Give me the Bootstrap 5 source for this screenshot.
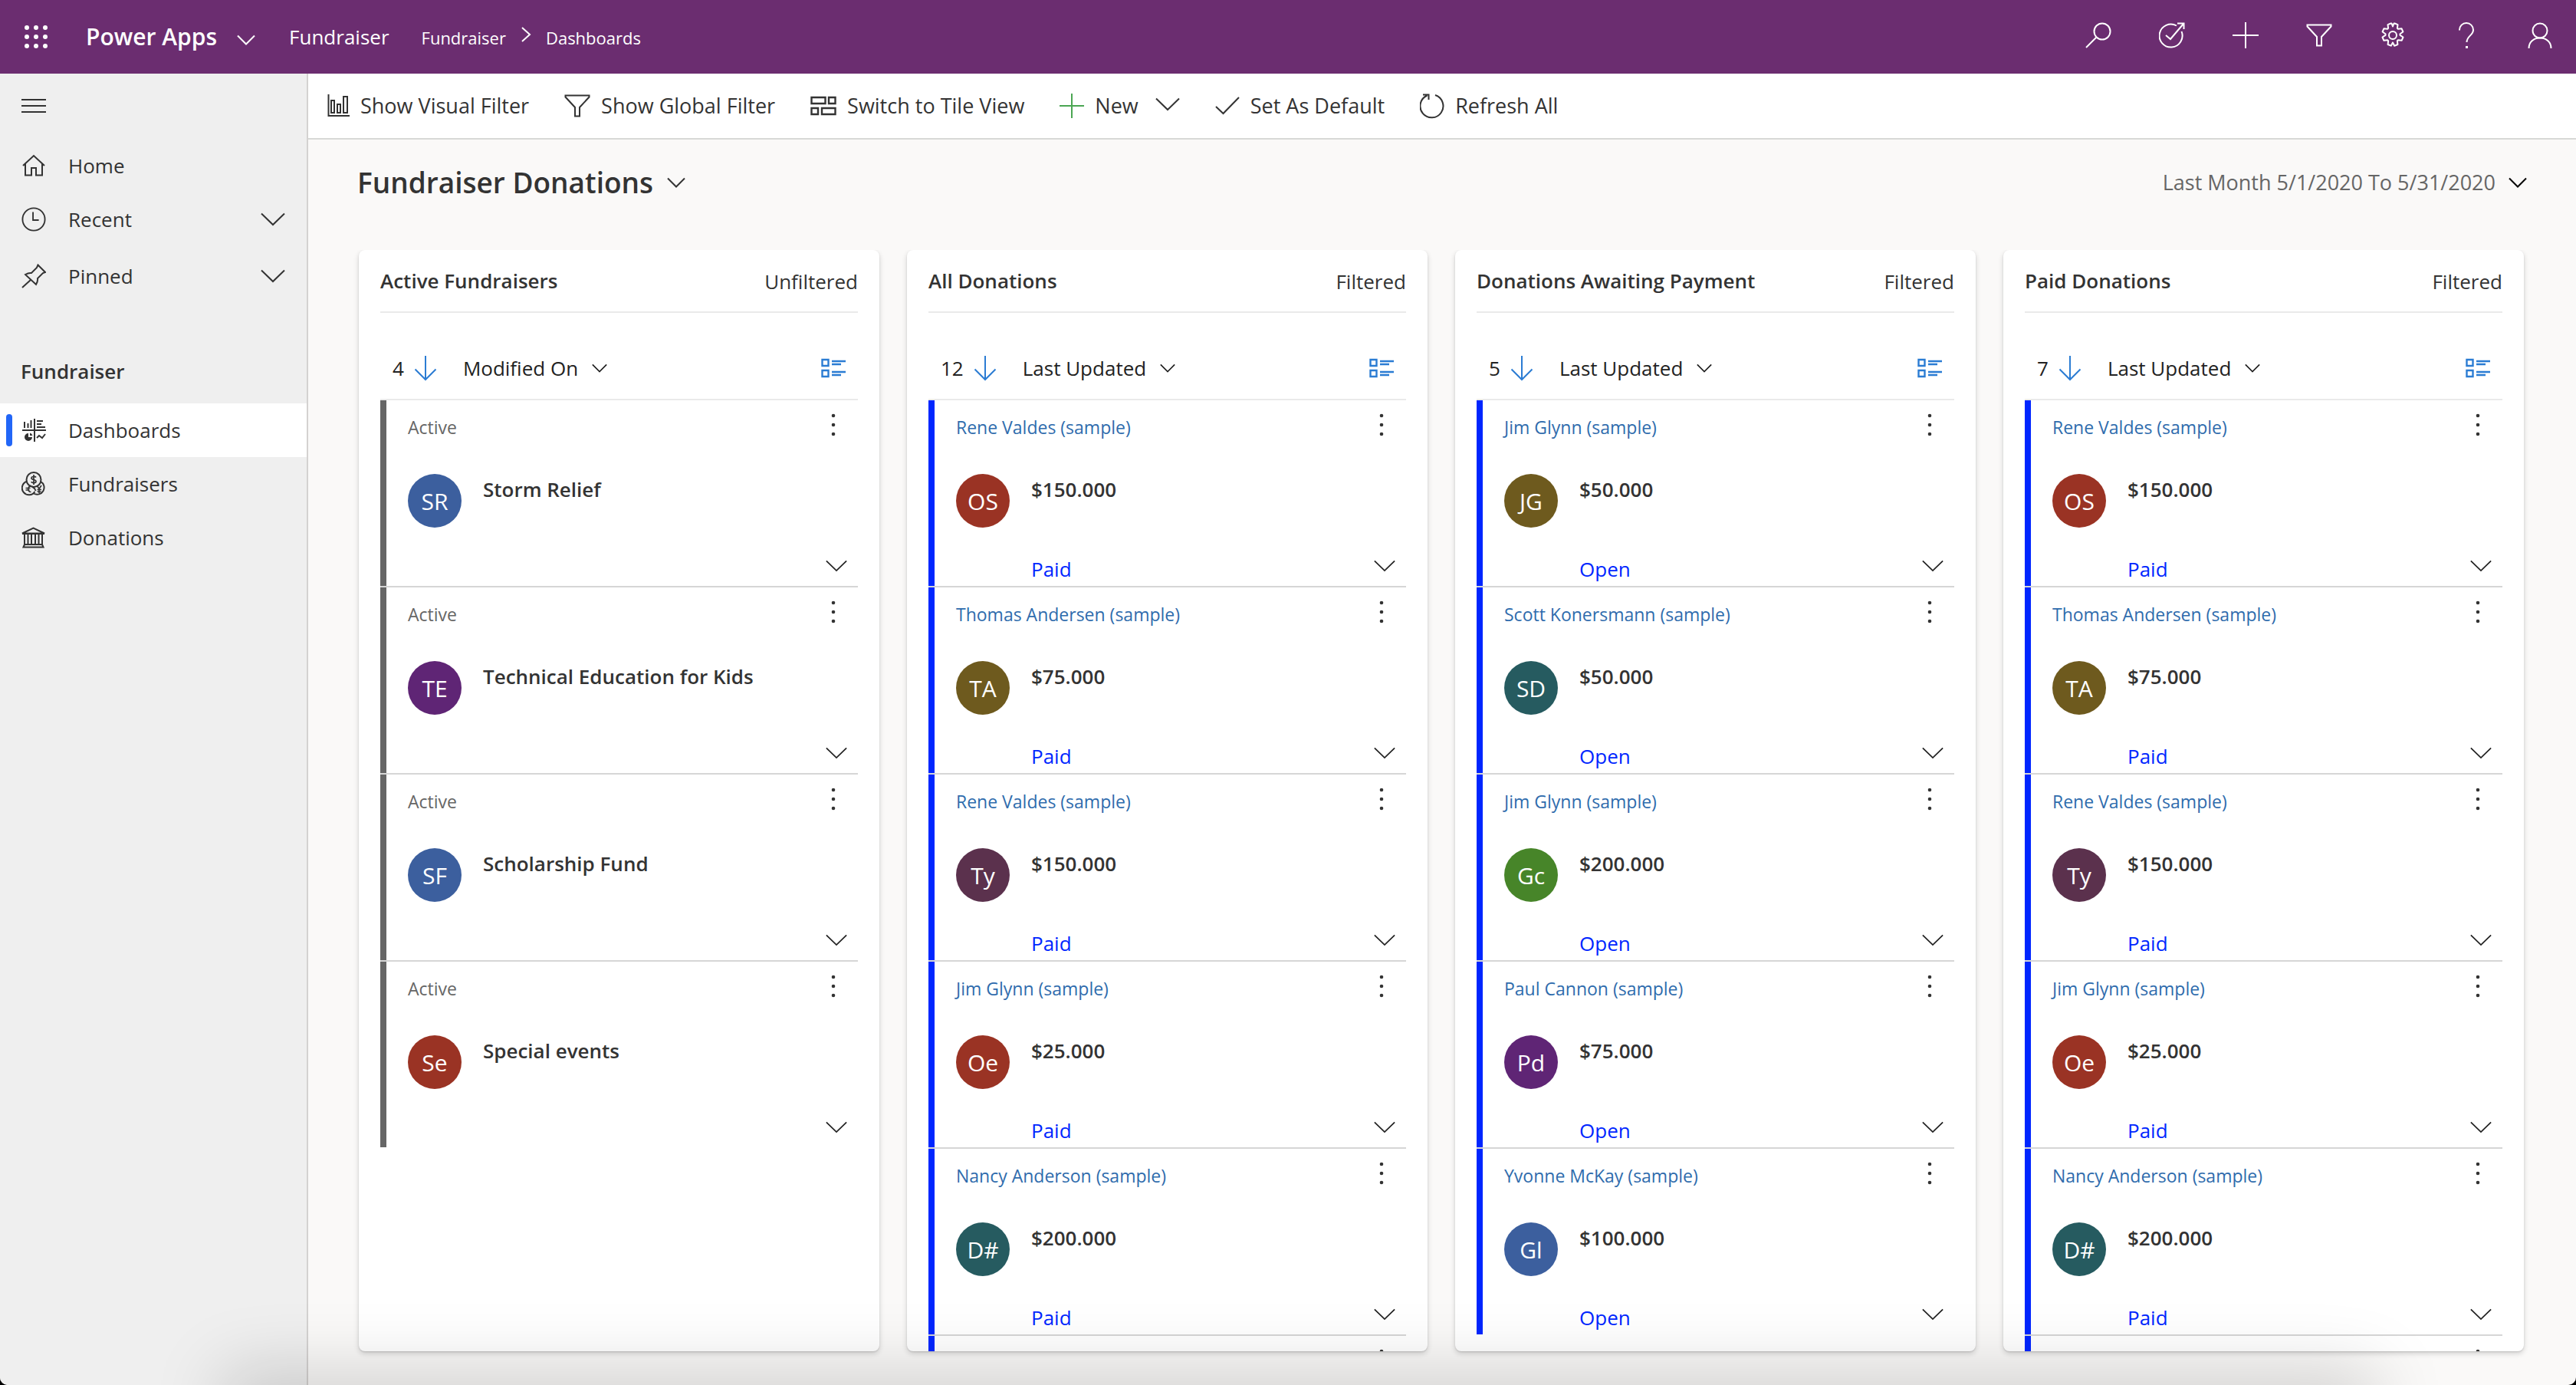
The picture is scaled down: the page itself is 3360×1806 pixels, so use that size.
<!DOCTYPE html>
<html lang="en">
<head>
<meta charset="utf-8">
<meta name="viewport" content="width=device-width, initial-scale=1">
<title>Fundraiser Donations - Power Apps</title>
<link href="https://cdn.jsdelivr.net/npm/bootstrap@5.3.0/dist/css/bootstrap.min.css" rel="stylesheet">
<style>
  html { background: #000; }
  body { font-family: "Open Sans", "Noto Sans", sans-serif; font-size: 26px; line-height: 40px; color: #333; background: #000; }
  svg { fill: none; stroke: currentColor; stroke-width: 2; flex: none; display: block; }
  button { font: inherit; color: inherit; background: none; border: 0; padding: 0; text-align: left; white-space: nowrap; }
  a { color: inherit; text-decoration: none; }
  .app-shell { background: #faf9f8; border-radius: 0 0 10px 10px; }
  .top-bar { height: 96px; background: #6b2d70; color: #fff; padding: 0 30px 0 32px; }
  .launcher { margin-right: 50px; }
  .brand-name { font-size: 30px; font-weight: 600; }
  .brand-name svg { margin: 8px 0 0 26px; }
  .page-crumbs { gap: 42px; margin-left: 44px; }
  .crumbs { font-size: 22px; }
  .top-tools { gap: 62px; padding-bottom: 4px; }
  .side-nav { width: 402px; background: #efefef; border-right: 2px solid #d4d2d1; }
  .side-toggle { padding: 26px 28px 29px; }
  .side-link { height: 70px; padding: 0 28px; gap: 29px; }
  .side-heading { height: 70px; line-height: 70px; padding: 0 27px; margin: 54px 0 7px; font-size: 26px; font-weight: 600; }
  .side-link.is-current { background: #fff; padding-left: 8px; gap: 0; }
  .is-current .marker { width: 8px; height: 42px; border-radius: 4px; background: #2266f7; margin-right: 12px; }
  .is-current svg { margin-right: 29px; }
  .command-bar { height: 86px; background: #fff; border-bottom: 2px solid #d8d8d6; padding: 0 24px; gap: 46px; font-size: 27px; }
  .cmd { gap: 14px; }
  .view-head { padding: 28px 64px 60px 64px; }
  .view-title { font-size: 37px; font-weight: 600; line-height: 56px; }
  .view-title svg { margin-left: 18px; }
  .period { color: #666; gap: 17px; font-size: 27px; }
  .board { padding: 0 68px 44px 66px; gap: 36px; }
  .stream { flex: 1 1 0; background: #fff; border-radius: 8px; padding: 0 28px; box-shadow: 0 3px 7px rgba(0,0,0,.16), 0 1px 2px rgba(0,0,0,.12); }
  .stream-head { height: 82px; flex: none; border-bottom: 2px solid #eaeaea; }
  .stream-head h2 { font-size: 26px; font-weight: 600; line-height: 40px; margin: 0; }
  .stream-head span { padding-top: 2px; }
  .stream-sort { height: 114px; flex: none; border-bottom: 2px solid #eaeaea; padding: 32px 16px 0; color: #222; }
  .sort-arrow { margin: 0 34px 0 13px; }
  .sort-by { gap: 18px; }
  .blue-icon { color: #2b7cd3; }
  .record { height: 244px; border-left: 8px solid #666; border-bottom: 2px solid #d6d6d6; padding: 12px 16px 2px 28px; }
  .record-list li:last-child .record { border-bottom-color: transparent; }
  .donations .record { border-left-color: #0026ff; }
  .record-wrap { position: relative; }
  /* rule runs over the coloured edge too */
  .record-wrap::after { content: ""; position: absolute; left: 0; bottom: 0; width: 8px; height: 2px; background: #d6d6d6; }
  .record-list li:last-child .record-wrap::after { background: #fff; }
  .record-top { height: 40px; margin-bottom: 44px; }
  .owner { font-size: 23px; line-height: 32px; padding-top: 5px; color: #666; }
  a.owner { color: #2f6cad; }
  .record-mid { gap: 28px; }
  .avatar-dot { width: 70px; height: 70px; border-radius: 50%; color: #fff; font-size: 30px; line-height: 72px; text-align: center; flex: none; }
  .record-name { font-weight: 600; }
  .record-end { height: 40px; padding-left: 98px; margin-right: -2px; }
  .status { color: #0026ff; }
  .expand { padding-bottom: 8px; color: #222; }
  /* soft shade along the lower edge of the window */
  .dock-shade { left: 310px; right: 280px; bottom: -52px; height: 50px; box-shadow: 0 0 90px 20px rgba(0,0,0,.17); pointer-events: none; }
</style>
</head>
<body>
<svg width="0" height="0" class="position-absolute" aria-hidden="true">
  <symbol id="chev" viewBox="0 0 32 18"><path d="M1 1.500l15 14.500 15-14.500"/></symbol>
  <symbol id="chev-sm" viewBox="0 0 24 14"><path d="M1 1.500l11 11 11-11"/></symbol>
  <symbol id="waffle" viewBox="0 0 30 30"><g fill="currentColor" stroke="none"><circle cx="3" cy="3" r="3"/><circle cx="15" cy="3" r="3"/><circle cx="27" cy="3" r="3"/><circle cx="3" cy="15" r="3"/><circle cx="15" cy="15" r="3"/><circle cx="27" cy="15" r="3"/><circle cx="3" cy="27" r="3"/><circle cx="15" cy="27" r="3"/><circle cx="27" cy="27" r="3"/></g></symbol>
  <symbol id="funnel" viewBox="0 0 34 30"><path d="M1.500 1.500h31v2L20 17v11.500h-6V17L1.500 3.500z"/></symbol>
  <symbol id="dots" viewBox="0 0 32 30"><g fill="currentColor" stroke="none"><circle cx="16" cy="3" r="2.300"/><circle cx="16" cy="15" r="2.300"/><circle cx="16" cy="27" r="2.300"/></g></symbol>
  <symbol id="arrow" viewBox="0 0 30 34"><path d="M15 1v31M1.500 18.500L15 32l13.500-13.500"/></symbol>
  <symbol id="list" viewBox="0 0 32 26"><path stroke-width="2.400" d="M1.500 2h8v8h-8zM1.500 16h8v8h-8zM14 4h18M14 8h12M14 18h18M14 22h12"/></symbol>
</svg>

<div class="app-shell vh-100 d-flex flex-column overflow-hidden position-relative">
  <header class="top-bar d-flex align-items-center flex-shrink-0">
    <button aria-label="App launcher" class="launcher"><svg width="30" height="30"><use href="#waffle"/></svg></button>
    <button class="brand-name d-flex align-items-center">Power Apps<svg width="24" height="14"><use href="#chev-sm"/></svg></button>
    <nav class="page-crumbs d-flex align-items-baseline" aria-label="Breadcrumb">
      <a href="#">Fundraiser</a>
      <div class="crumbs d-flex align-items-center">
        <a href="#">Fundraiser</a>
        <svg class="mx-3 mb-2" width="20" height="20" viewBox="0 0 20 20"><path d="M5 1l10 9-10 9"/></svg>
        <a href="#">Dashboards</a>
      </div>
    </nav>
    <div class="top-tools d-flex align-items-center ms-auto">
      <button aria-label="Search"><svg width="34" height="34" viewBox="0 0 34 34"><circle cx="22" cy="12" r="10.500"/><path d="M14.500 19.500L1 33"/></svg></button>
      <button aria-label="Task flow"><svg width="34" height="34" viewBox="0 0 34 34"><path d="M23 4.500A15 15 0 1 0 29.500 12M9 17l6 5L32 2M24 1.500h8.500V9"/></svg></button>
      <button aria-label="Create"><svg width="34" height="34" viewBox="0 0 34 34"><path d="M17 0v34M0 17h34"/></svg></button>
      <button aria-label="Advanced find"><svg width="34" height="30"><use href="#funnel"/></svg></button>
      <button aria-label="Settings"><svg width="34" height="34" viewBox="0 0 34 34"><circle cx="17" cy="17" r="5"/><path stroke-linejoin="round" d="M14.500 1.500h1l1.500 4 1.500-4h1l4 1.700-.6 4.600 1 1 4.600-.6 1.900 4.300-3.900 2.800v1.500l4 2.700-1.900 4.300-4.700-.5-1 1 .5 4.700-4.200 1.800-2.200-4.300-2.300 4.200-4.100-1.700.5-4.700-1-1-4.700.5-1.900-4.300 4-2.700v-1.500L3.600 12.500l1.900-4.300 4.600.6 1-1-.6-4.600z"/></svg></button>
      <button aria-label="Help"><svg width="34" height="34" viewBox="0 0 34 34"><path d="M8 10.500V10a9 9 0 0 1 18 0c0 7-8.500 8-8.500 16"/><path d="M17.500 31v3" stroke-width="3"/></svg></button>
      <button aria-label="Account"><svg width="34" height="34" viewBox="0 0 34 34"><circle cx="17" cy="11" r="9.500"/><path d="M2.500 34c0-8 6-13.500 14.500-13.500S31.500 26 31.500 34"/></svg></button>
    </div>
  </header>

  <div class="d-flex flex-grow-1 overflow-hidden">
    <aside class="side-nav flex-shrink-0">
      <button class="side-toggle d-block" aria-label="Collapse menu"><svg width="32" height="30" viewBox="0 0 32 30"><path d="M0 8h32M0 16h32M0 24h32"/></svg></button>
      <nav>
        <a href="#" class="side-link d-flex align-items-center"><svg width="32" height="30" viewBox="0 0 32 30"><path d="M2 15L16 2l14 13M5 12.500V27.500h8V18h6v9.500h8V12.500"/></svg>Home</a>
        <button class="side-link d-flex align-items-center w-100"><svg width="32" height="34" viewBox="0 0 34 34"><circle cx="17" cy="17" r="15.500"/><path d="M16 7v11h8"/></svg>Recent<svg class="ms-auto" width="32" height="18"><use href="#chev"/></svg></button>
        <button class="side-link d-flex align-items-center w-100 mt-1"><svg width="32" height="32" viewBox="0 0 32 32"><path d="M1 31l11.500-10.500M21.500 1.500l9.500 9.500-3 1-7 7c.5 3-.500 5.500-2 8L5 14c2.500-1.500 5-2.500 8-2l7-7z"/></svg>Pinned<svg class="ms-auto" width="32" height="18"><use href="#chev"/></svg></button>
        <h2 class="side-heading">Fundraiser</h2>
        <a href="#" class="side-link is-current d-flex align-items-center" aria-current="page"><span class="marker"></span>
          <svg width="32" height="32" viewBox="0 0 32 32"><path d="M1 16h31M17 1v30" stroke-width="2"/><path d="M4 5v8M8.500 7v6M12.500 3v10M20 4h8M20 8h6M20 12h11"/><path d="M9 20v5h5a5 5 0 1 1-5-5z" fill="currentColor" stroke="none"/><path d="M11 19.500a5 5 0 0 1 3.500 3.500H11z" fill="currentColor" stroke="none"/><path d="M20 26l3-3 4 3 4-5"/></svg>Dashboards</a>
        <a href="#" class="side-link d-flex align-items-center">
          <svg width="32" height="32" viewBox="0 0 32 32"><circle cx="16" cy="10.500" r="9.500"/><path d="M7 12.800A9 9 0 1 0 17.500 26M25 12.800A9 9 0 1 1 16 28.500M14 19.500a9 9 0 0 1 4.500 5.500"/><path stroke-width="1.700" d="M19 7.500c-1-1.500-6-1.500-6 1 0 2.700 6 1.300 6 4.200 0 2.500-5 2.500-6.300.6M16 4v13M13 18.500c-5-.5-6 8-.5 8M5.500 21.500h6M5.500 24h5M20.500 18.500l2.500 4 3-4.500M23 22.500V28M20.500 23.500h5.500M20.500 26h5"/></svg>Fundraisers</a>
        <a href="#" class="side-link d-flex align-items-center">
          <svg width="32" height="30" viewBox="0 0 32 30"><path d="M1 9.500L15.500 2.500 30 9.500zM2.500 27.500L4 24h23l1.500 3.500zM4 10v14M8.500 10v14M13 10v14M18 10v14M22.500 10v14M27 10v14M1 10h29"/></svg>Donations</a>
      </nav>
    </aside>

    <main class="d-flex flex-column flex-grow-1 overflow-hidden">
      <div class="command-bar d-flex align-items-center flex-shrink-0">
        <button class="cmd d-flex align-items-center"><svg width="30" height="30" viewBox="0 0 30 30"><path d="M2.500 0v28H30M6 8h4v16H6zM14 13h4v11h-4zM22 3h5v21h-5z"/></svg>Show Visual Filter</button>
        <button class="cmd d-flex align-items-center"><svg width="34" height="30"><use href="#funnel"/></svg>Show Global Filter</button>
        <button class="cmd d-flex align-items-center"><svg width="34" height="26" viewBox="0 0 34 26"><path stroke-width="2.400" d="M1.500 2h18v8h-18zM24 2h8.500v8H24zM1.500 16H10v8H1.500zM15 16h17.500v8H15z"/></svg>Switch to Tile View</button>
        <button class="cmd d-flex align-items-center"><svg width="32" height="32" viewBox="0 0 32 32" style="color:#4ba653"><path d="M16 0v32M0 16h32"/></svg>New<svg class="ms-2 mb-1" width="32" height="18"><use href="#chev"/></svg></button>
        <button class="cmd d-flex align-items-center"><svg width="32" height="24" viewBox="0 0 32 24"><path d="M1 13l9.500 9L31 1"/></svg>Set As Default</button>
        <button class="cmd d-flex align-items-center"><svg width="32" height="34" viewBox="0 0 32 34"><path d="M20 3a15 15 0 1 1-10.500.5M4 2.500h7.500V9"/></svg>Refresh All</button>
      </div>

      <div class="view-head d-flex align-items-center flex-shrink-0">
        <h1 class="m-0"><button class="view-title d-flex align-items-center">Fundraiser Donations<svg width="24" height="14"><use href="#chev-sm"/></svg></button></h1>
        <button class="period d-flex align-items-center ms-auto">Last Month 5/1/2020 To 5/31/2020<svg class="text-black" width="24" height="14"><use href="#chev-sm"/></svg></button>
      </div>

      <div class="board d-flex flex-grow-1 overflow-hidden" id="board"></div>
    </main>
  </div>
  <div class="dock-shade position-absolute"></div>
</div>

<script src="https://cdn.jsdelivr.net/npm/bootstrap@5.3.0/dist/js/bootstrap.bundle.min.js"></script>
<script>
  const BLUE = '#3c5f9e', PURPLE = '#5f2575', RED = '#9a3324', OLIVE = '#6e5a1e', PLUM = '#5b314d', TEAL = '#265b60', GREEN = '#478529';
  const paid = [
    ['Rene Valdes (sample)', 'OS', RED, '$150.000', 'Paid'],
    ['Thomas Andersen (sample)', 'TA', OLIVE, '$75.000', 'Paid'],
    ['Rene Valdes (sample)', 'Ty', PLUM, '$150.000', 'Paid'],
    ['Jim Glynn (sample)', 'Oe', RED, '$25.000', 'Paid'],
    ['Nancy Anderson (sample)', 'D#', TEAL, '$200.000', 'Paid'],
    ['', '', 'transparent', '', '']
  ];
  const streams = [
    { title: 'Active Fundraisers', filter: 'Unfiltered', count: 4, sort: 'Modified On', rows: [
      ['Active', 'SR', BLUE, 'Storm Relief', ''],
      ['Active', 'TE', PURPLE, 'Technical Education for Kids', ''],
      ['Active', 'SF', BLUE, 'Scholarship Fund', ''],
      ['Active', 'Se', RED, 'Special events', '']] },
    { title: 'All Donations', filter: 'Filtered', count: 12, sort: 'Last Updated', donations: true, rows: paid },
    { title: 'Donations Awaiting Payment', filter: 'Filtered', count: 5, sort: 'Last Updated', donations: true, rows: [
      ['Jim Glynn (sample)', 'JG', OLIVE, '$50.000', 'Open'],
      ['Scott Konersmann (sample)', 'SD', TEAL, '$50.000', 'Open'],
      ['Jim Glynn (sample)', 'Gc', GREEN, '$200.000', 'Open'],
      ['Paul Cannon (sample)', 'Pd', PURPLE, '$75.000', 'Open'],
      ['Yvonne McKay (sample)', 'Gl', BLUE, '$100.000', 'Open']] },
    { title: 'Paid Donations', filter: 'Filtered', count: 7, sort: 'Last Updated', donations: true, rows: paid }
  ];
  const icon = (id, w, h) => `<svg width="${w}" height="${h}"><use href="#${id}"/></svg>`;
  const record = (s, [owner, initials, color, name, status]) => `
    <li><div class="record-wrap"><div class="record d-flex flex-column">
      <div class="record-top d-flex justify-content-between align-items-center">
        ${s.donations ? `<a href="#" class="owner">${owner}</a>` : `<span class="owner">${owner}</span>`}
        <button aria-label="More commands">${icon('dots', 32, 30)}</button>
      </div>
      <div class="record-mid d-flex">
        <div class="avatar-dot" style="background:${color}">${initials}</div>
        <div class="record-name">${name}</div>
      </div>
      <div class="record-end d-flex justify-content-between align-items-center mt-auto">
        <span class="status">${status}</span>
        <button class="expand" aria-label="Expand">${icon('chev', 28, 16)}</button>
      </div>
    </div></div></li>`;
  document.getElementById('board').innerHTML = streams.map(s => `
    <section class="stream d-flex flex-column overflow-hidden ${s.donations ? 'donations' : ''}">
      <div class="stream-head d-flex justify-content-between align-items-center"><h2>${s.title}</h2><span>${s.filter}</span></div>
      <div class="stream-sort d-flex align-items-center">
        <span>${s.count}</span>
        <button class="sort-arrow blue-icon" aria-label="Sort direction">${icon('arrow', 30, 34)}</button>
        <button class="sort-by d-flex align-items-center">${s.sort}${icon('chev-sm', 20, 12)}</button>
        <button class="blue-icon ms-auto" aria-label="Switch layout">${icon('list', 32, 26)}</button>
      </div>
      <ul class="record-list list-unstyled m-0 overflow-hidden">${s.rows.map(r => record(s, r)).join('')}</ul>
    </section>`).join('');
</script>
</body>
</html>
